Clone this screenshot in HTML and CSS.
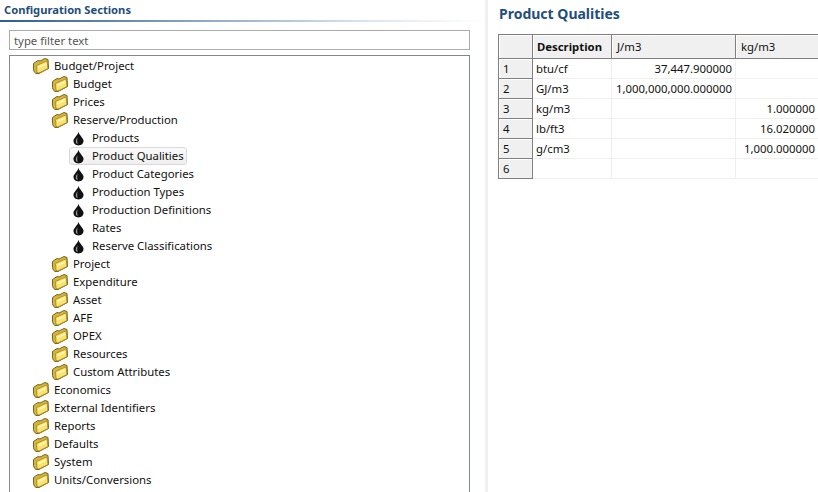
FILE: index.html
```html
<!DOCTYPE html>
<html lang="en">
<head>
    <meta charset="UTF-8">
    <title>Product Qualities</title>
    <link rel="stylesheet" href="styles.css">
</head>
<body>
    <svg class="defs" width="0" height="0">
        <symbol id="folder" viewBox="0 0 16 16">
            <path d="M0.500 5.500 L5 2.500 L7 3 L12 0.500 L15 1.500 L15.500 10.500 L6 15.500 L3 15.500 Q0.500 14 0.500 11.500 Z" fill="#d8b43a" stroke="#75641f" stroke-width="1"/>
            <path d="M3.500 7.500 L14 2.800 L15 10.500 L6 15 L4 14.500 Z" fill="#fbe26a" stroke="#9a8428" stroke-width="0.8"/>
            <path d="M5 8.500 L13 4.800 L13.500 6.800 L5.500 10.800 Z" fill="#fff5ae"/>
        </symbol>
        <symbol id="drop" viewBox="0 0 12 16">
            <path d="M6 0.500 C6.500 4 11.500 7.500 11.500 10.500 C11.500 13.800 9 15.500 6 15.500 C3 15.500 0.500 13.800 0.500 10.500 C0.500 7.500 5.500 4 6 0.500 Z" fill="#111"/>
            <path d="M5 6.500 C3.600 8.500 2.800 10 3.200 12 C3.500 13.200 4.300 13.600 5.200 13.800 C4.300 12 4.500 9 5 6.500 Z" fill="#9a9a9a"/>
        </symbol>
    </svg>

    <div class="left">
        <div class="section-title">Configuration Sections</div>
        <div class="title-rule"></div>
        <input class="filter" type="text" placeholder="type filter text">
        <div class="tree">
            <div class="row lvl0"><svg class="folder"><use href="#folder"/></svg><span>Budget/Project</span></div>
            <div class="row lvl1"><svg class="folder"><use href="#folder"/></svg><span>Budget</span></div>
            <div class="row lvl1"><svg class="folder"><use href="#folder"/></svg><span>Prices</span></div>
            <div class="row lvl1"><svg class="folder"><use href="#folder"/></svg><span>Reserve/Production</span></div>
            <div class="row lvl2"><svg class="drop"><use href="#drop"/></svg><span>Products</span></div>
            <div class="row lvl2 selected"><svg class="drop"><use href="#drop"/></svg><span>Product Qualities</span></div>
            <div class="row lvl2"><svg class="drop"><use href="#drop"/></svg><span>Product Categories</span></div>
            <div class="row lvl2"><svg class="drop"><use href="#drop"/></svg><span>Production Types</span></div>
            <div class="row lvl2"><svg class="drop"><use href="#drop"/></svg><span>Production Definitions</span></div>
            <div class="row lvl2"><svg class="drop"><use href="#drop"/></svg><span>Rates</span></div>
            <div class="row lvl2"><svg class="drop"><use href="#drop"/></svg><span>Reserve Classifications</span></div>
            <div class="row lvl1"><svg class="folder"><use href="#folder"/></svg><span>Project</span></div>
            <div class="row lvl1"><svg class="folder"><use href="#folder"/></svg><span>Expenditure</span></div>
            <div class="row lvl1"><svg class="folder"><use href="#folder"/></svg><span>Asset</span></div>
            <div class="row lvl1"><svg class="folder"><use href="#folder"/></svg><span>AFE</span></div>
            <div class="row lvl1"><svg class="folder"><use href="#folder"/></svg><span>OPEX</span></div>
            <div class="row lvl1"><svg class="folder"><use href="#folder"/></svg><span>Resources</span></div>
            <div class="row lvl1"><svg class="folder"><use href="#folder"/></svg><span>Custom Attributes</span></div>
            <div class="row lvl0"><svg class="folder"><use href="#folder"/></svg><span>Economics</span></div>
            <div class="row lvl0"><svg class="folder"><use href="#folder"/></svg><span>External Identifiers</span></div>
            <div class="row lvl0"><svg class="folder"><use href="#folder"/></svg><span>Reports</span></div>
            <div class="row lvl0"><svg class="folder"><use href="#folder"/></svg><span>Defaults</span></div>
            <div class="row lvl0"><svg class="folder"><use href="#folder"/></svg><span>System</span></div>
            <div class="row lvl0"><svg class="folder"><use href="#folder"/></svg><span>Units/Conversions</span></div>
        </div>
    </div>

    <div class="sash"></div>

    <div class="right">
        <h1>Product Qualities</h1>
        <table class="grid">
            <colgroup>
                <col class="col-num">
                <col class="col-desc">
                <col class="col-j">
                <col class="col-kg">
            </colgroup>
            <thead>
                <tr>
                    <th class="head"></th>
                    <th class="head strong">Description</th>
                    <th class="head">J/m3</th>
                    <th class="head">kg/m3</th>
                </tr>
            </thead>
            <tbody>
                <tr><th>1</th><td>btu/cf</td><td class="num">37,447.900000</td><td></td></tr>
                <tr><th>2</th><td>GJ/m3</td><td class="num">1,000,000,000.000000</td><td></td></tr>
                <tr><th>3</th><td>kg/m3</td><td></td><td class="num">1.000000</td></tr>
                <tr><th>4</th><td>lb/ft3</td><td></td><td class="num">16.020000</td></tr>
                <tr><th>5</th><td>g/cm3</td><td></td><td class="num">1,000.000000</td></tr>
                <tr><th>6</th><td></td><td></td><td></td></tr>
            </tbody>
        </table>
    </div>
</body>
</html>
```

FILE: styles.css
```css
html, body {
    height: 100%;
}

body {
    margin: 0;
    display: flex;
    overflow: hidden;
    background-color: #fff;
    color: #111;
    font-family: "Noto Sans", "Open Sans", sans-serif;
    font-size: 11.35px;
}

.defs {
    position: absolute;
}

/* Left pane */
.left {
    width: 485px;
    height: 492px;
    display: flex;
    flex-direction: column;
    flex-shrink: 0;
}

.section-title {
    margin: 2px 0 0 4px;
    height: 16px;
    line-height: 16px;
    font-size: 11.2px;
    font-weight: bold;
    color: #1f4e7d;
}

.title-rule {
    height: 2px;
    margin-top: 2px;
    background: linear-gradient(to right, #2a5f94, #d9e4ee 75%, #fff);
}

.filter {
    display: block;
    box-sizing: border-box;
    width: 461px;
    height: 20px;
    margin: 8px 0 0 9px;
    padding: 0 4px;
    border: 1px solid #ababab;
    outline: none;
    font-family: inherit;
    font-size: 11.35px;
}

.filter::placeholder {
    color: #555;
    opacity: 1;
}

.tree {
    box-sizing: border-box;
    flex: 1;
    width: 461px;
    margin: 5px 0 0 9px;
    padding-top: 1px;
    border: 1px solid #828790;
    border-bottom: none;
    overflow: hidden;
}

.row {
    display: flex;
    align-items: center;
    height: 18px;
    white-space: nowrap;
}

.row span {
    line-height: 18px;
}

.lvl0 { padding-left: 23px; }
.lvl1 { padding-left: 42px; }
.lvl2 { padding-left: 63px; }

.folder {
    width: 16px;
    height: 16px;
    margin-right: 5px;
    flex-shrink: 0;
}

.drop {
    width: 11px;
    height: 15px;
    margin-right: 8px;
    flex-shrink: 0;
}

.selected span {
    position: relative;
}

/* selection pill sits behind the icon and the label */
.selected {
    position: relative;
}

.selected::before {
    content: '';
    position: absolute;
    left: 59px;
    top: 0;
    width: 118px;
    height: 18px;
    box-sizing: border-box;
    border: 1px solid #d9d9d9;
    border-radius: 3px;
    background: linear-gradient(to bottom, #fafafa, #efefef);
}

.selected svg {
    position: relative;
}

.sash {
    width: 3px;
    flex-shrink: 0;
    background-color: #f0f0f0;
}

/* Right pane */
.right {
    flex: 1;
    min-width: 0;
    padding-left: 10px;
}

h1 {
    margin: 4px 0 0 1px;
    height: 20px;
    line-height: 20px;
    font-size: 14px;
    font-weight: bold;
    color: #1f4e7d;
}

.grid {
    border-collapse: separate;
    border-spacing: 0;
    table-layout: fixed;
    width: 320px;
    margin-top: 10px;
    border-left: 1px solid #808080;
    border-top: 1px solid #808080;
}

.col-num { width: 34px; }
.col-desc { width: 79px; }
.col-j { width: 124px; }
.col-kg { width: 83px; }

.grid th,
.grid td {
    padding: 0 3px;
    height: 20px;
    box-sizing: border-box;
    font-size: 11.35px;
    font-weight: normal;
    text-align: left;
    white-space: nowrap;
    overflow: hidden;
}

.grid td {
    border-right: 1px solid #efefef;
    border-bottom: 1px solid #efefef;
}

.grid tbody th {
    padding-left: 4px;
    background-color: #f0f0f0;
    border-right: 1px solid #808080;
    border-bottom: 1px solid #808080;
    box-shadow: inset 1px 1px 0 #fff;
}

.grid .head {
    height: 24px;
    padding-left: 5px;
    background-color: #f0f0f0;
    border-right: 1px solid #808080;
    border-bottom: 1px solid #808080;
    box-shadow: inset 1px 1px 0 #fff;
}

.grid .strong {
    font-weight: bold;
    padding-left: 4px;
}

.grid .num {
    text-align: right;
}
```
